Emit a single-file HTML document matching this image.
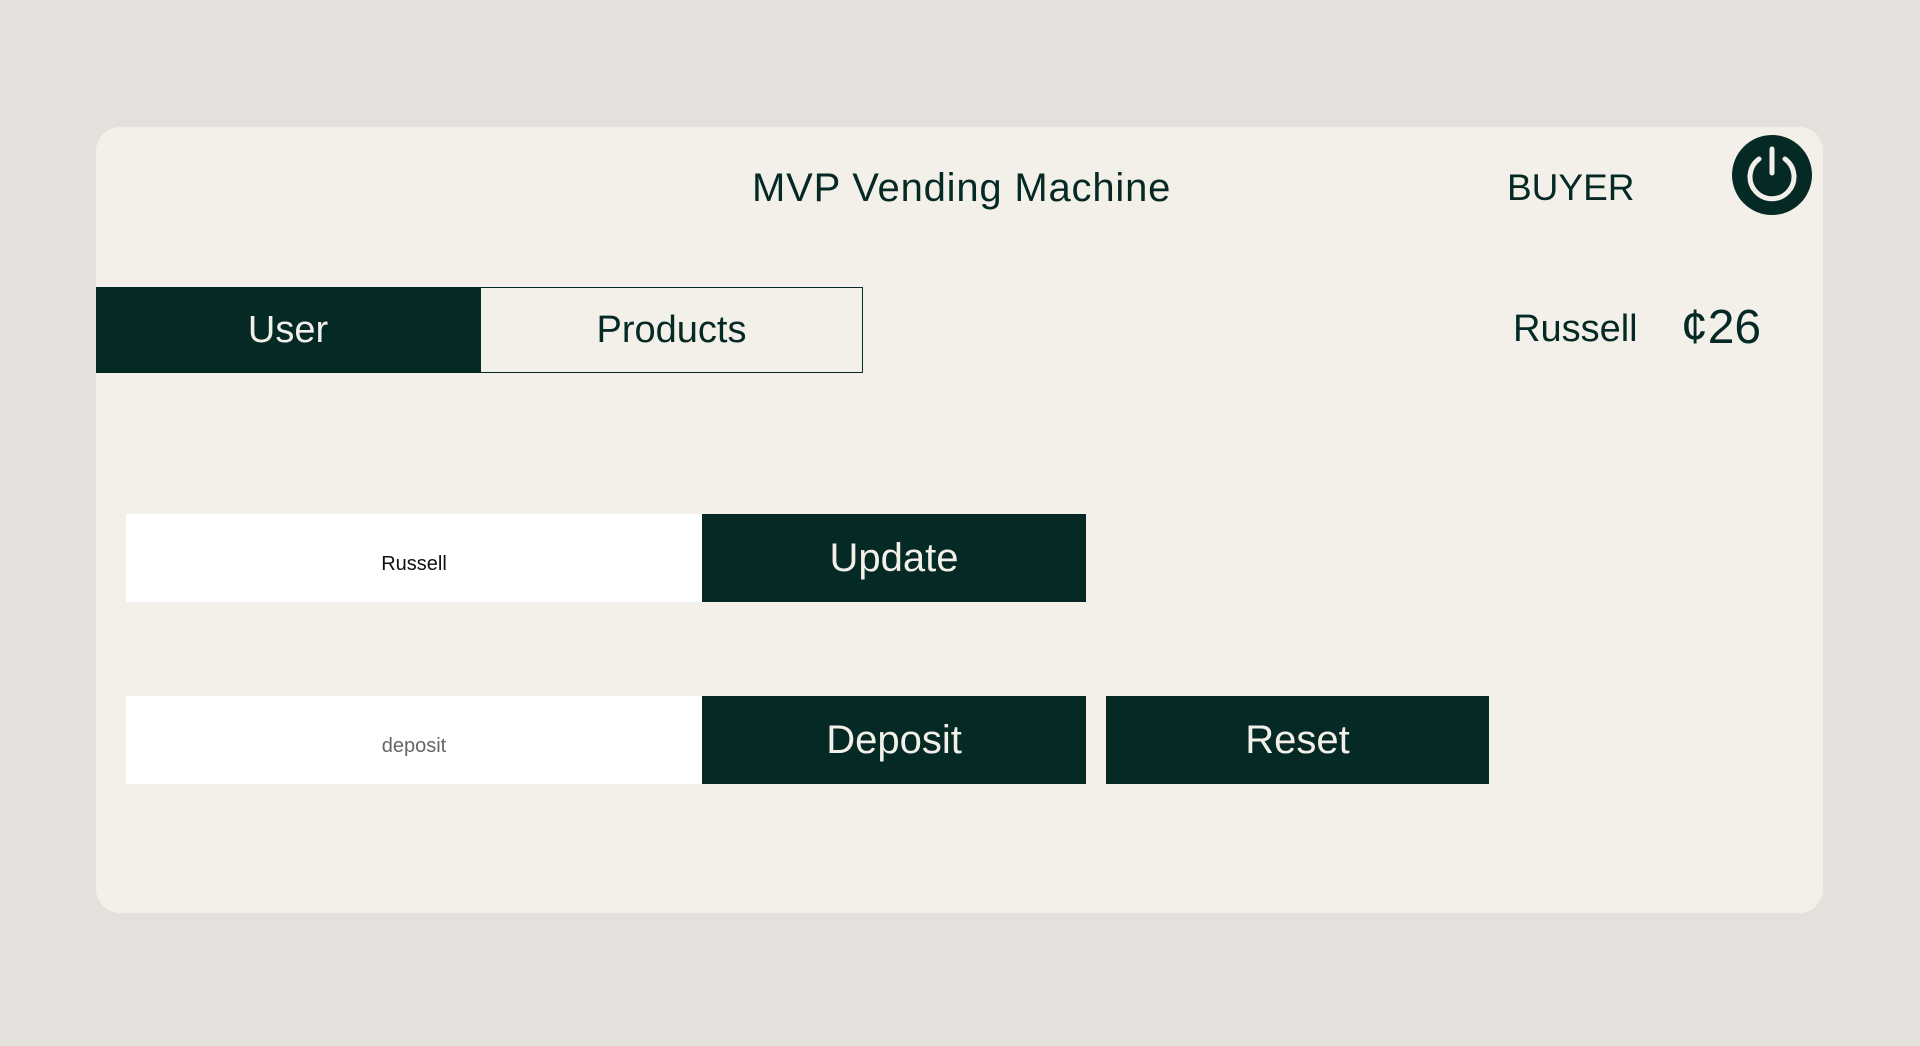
<!DOCTYPE html>
<html><head><meta charset="utf-8"><style>
body{margin:0;width:1920px;height:1046px;background:#e4e1dc;font-family:"Liberation Sans",sans-serif;position:relative;overflow:hidden}
.card{position:absolute;left:96px;top:127px;width:1727px;height:786px;background:#f3f0ea;border-radius:24px}
.a{position:absolute;color:#052924;white-space:nowrap}
.dark{position:absolute;background:#052924;color:#f3f0ea;display:flex;align-items:center;justify-content:center;font-size:40px}
.inp{position:absolute;background:#fff;display:flex;align-items:center;justify-content:center;font-size:20px;padding-top:12px;box-sizing:border-box}
</style></head><body>
<div class="card"></div>
<div class="a" style="left:752px;top:166px;font-size:40px;letter-spacing:0.8px">MVP Vending Machine</div>
<div class="a" style="left:1507px;top:167px;font-size:37px">BUYER</div>
<svg style="position:absolute;left:1732px;top:135px" width="80" height="80" viewBox="0 0 80 80">
<circle cx="40" cy="40" r="40" fill="#052924"/>
<path d="M27 24 A22 22 0 1 0 53 24" fill="none" stroke="#f3f0ea" stroke-width="5" stroke-linecap="round"/>
<line x1="40" y1="14" x2="40" y2="38" stroke="#f3f0ea" stroke-width="5" stroke-linecap="round"/>
</svg>
<div class="dark" style="left:96px;top:287px;width:384px;height:86px;font-size:38px">User</div>
<div class="a" style="left:480px;top:287px;height:84px;border:1px solid #052924;display:flex;align-items:center;justify-content:center;font-size:38px;width:381px">Products</div>
<div class="a" style="left:1513px;top:308px;font-size:38px">Russell</div>
<div class="a" style="left:1681px;top:300px;font-size:48px">¢26</div>
<div class="inp" style="left:126px;top:514px;width:576px;height:88px;color:#111">Russell</div>
<div class="dark" style="left:702px;top:514px;width:384px;height:88px">Update</div>
<div class="inp" style="left:126px;top:696px;width:576px;height:88px;color:#666">deposit</div>
<div class="dark" style="left:702px;top:696px;width:384px;height:88px">Deposit</div>
<div class="dark" style="left:1106px;top:696px;width:383px;height:88px">Reset</div>
</body></html>
